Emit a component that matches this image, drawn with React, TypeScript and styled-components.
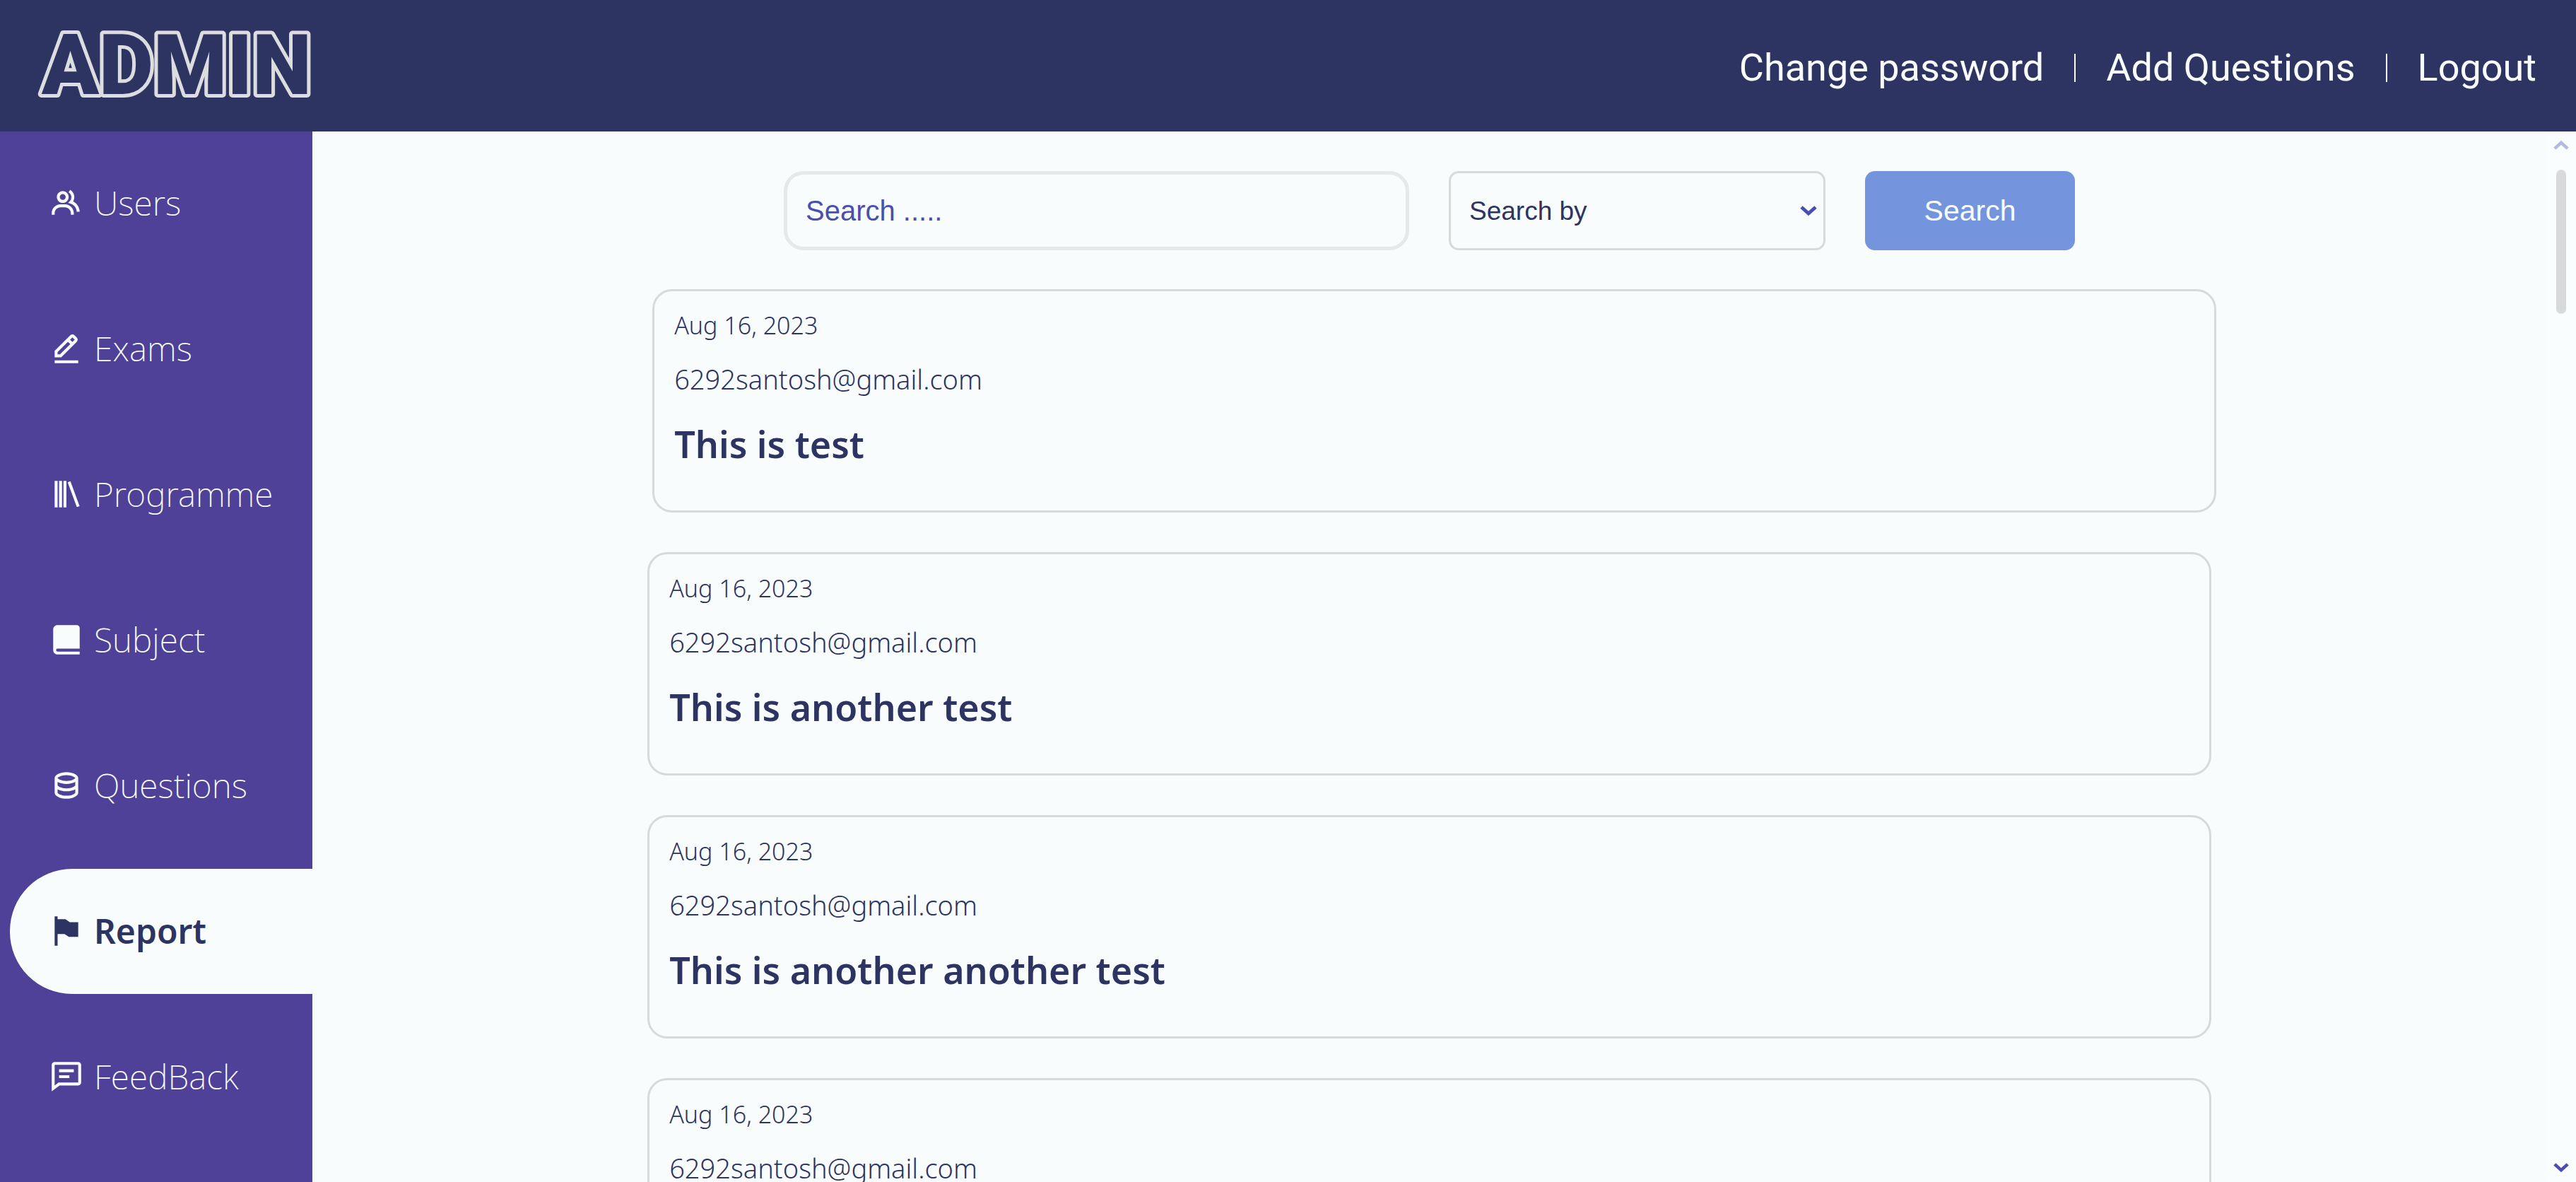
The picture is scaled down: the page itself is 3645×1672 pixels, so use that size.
import React, { useState } from 'react';
import styled, { createGlobalStyle } from 'styled-components';
import type { IconType } from 'react-icons';
import {
  BiCommentDetail,
  BiData,
  BiEditAlt,
  BiGroup,
  BiLibrary,
  BiSolidBookAlt,
  BiSolidFlagAlt,
} from 'react-icons/bi';

const color = {
  navy: '#2e3462',
  purple: '#4f4198',
  indigo: '#4a4fae',
  blue: '#7495dd',
  paper: '#f8fcfd',
  line: '#d8d9db',
  softLine: '#e6e8ea',
};

const GlobalStyle = createGlobalStyle`
  *, *::before, *::after { box-sizing: border-box; }
  body {
    margin: 0;
    background: ${color.paper};
    color: ${color.navy};
    font-family: "Noto Sans", "Open Sans", sans-serif;
  }
`;

const Page = styled.div`
  display: flex;
  flex-direction: column;
  height: 100vh;
  overflow: hidden;
`;

const Header = styled.header`
  display: flex;
  align-items: center;
  justify-content: space-between;
  flex: none;
  padding: 18px 56px 18px 48px;
  background: ${color.navy};
`;

const Wordmark = styled.svg`
  display: block;
  width: 420px;
  height: 150px;

  text {
    font-family: Roboto, sans-serif;
    font-weight: 900;
    font-size: 119px;
    fill: ${color.navy};
    stroke: #dcdddf;
    stroke-width: 10px;
    stroke-linejoin: round;
    paint-order: stroke fill;
  }
`;

const TopNav = styled.nav`
  display: flex;
  align-items: center;
  gap: 43px;
  padding-top: 6px;
`;

const TopLink = styled.a`
  color: ${color.paper};
  font-family: Roboto, sans-serif;
  font-size: 54px;
  line-height: 64px;
  text-decoration: none;
  white-space: nowrap;
`;

const Divider = styled.span`
  width: 2px;
  height: 40px;
  background: ${color.paper};
`;

const Body = styled.div`
  display: flex;
  flex: 1;
  min-height: 0;
`;

const Sidebar = styled.nav`
  display: flex;
  flex-direction: column;
  flex: none;
  gap: 29px;
  width: 442px;
  padding: 13px 0 0 14px;
  background: ${color.purple};
`;

const SideLink = styled.a<{ $active: boolean }>`
  display: flex;
  align-items: center;
  gap: 14px;
  padding: 56px 0 57px 55px;
  border-radius: 88px 0 0 88px;
  background: ${p => (p.$active ? color.paper : 'transparent')};
  color: ${p => (p.$active ? color.navy : color.paper)};
  font-size: 48px;
  font-weight: ${p => (p.$active ? 600 : 200)};
  line-height: 64px;
  text-decoration: none;

  svg {
    flex: none;
    width: 50px;
    height: 50px;
  }
`;

const Main = styled.main`
  flex: 1;
  min-width: 0;
  overflow: hidden;
  padding-top: 56px;
`;

const SearchForm = styled.form`
  display: flex;
  justify-content: center;
  gap: 56px;
  margin-bottom: 55px;
`;

const SearchInput = styled.input`
  width: 28%;
  height: 112px;
  padding: 0 26px;
  border: 5px solid ${color.softLine};
  border-radius: 28px;
  background: ${color.paper};
  color: ${color.navy};
  font-family: "Liberation Sans", Arial, sans-serif;
  font-size: 40px;
  outline: none;

  &::placeholder {
    color: ${color.indigo};
    opacity: 1;
  }
`;

const SelectBox = styled.div`
  display: grid;
  align-items: center;
  width: 533px;

  > * { grid-area: 1 / 1; }

  svg {
    justify-self: end;
    width: 24px;
    height: 16px;
    margin-right: 12px;
    color: ${color.indigo};
    pointer-events: none;
  }
`;

const Select = styled.select`
  width: 100%;
  height: 112px;
  padding: 0 26px;
  border: 3px solid ${color.line};
  border-radius: 14px;
  background: ${color.paper};
  color: ${color.navy};
  font-family: "Liberation Sans", Arial, sans-serif;
  font-size: 37px;
  appearance: none;
`;

const SearchButton = styled.button`
  width: 297px;
  height: 112px;
  border: 0;
  border-radius: 14px;
  background: ${color.blue};
  color: ${color.paper};
  font-family: "Liberation Sans", Arial, sans-serif;
  font-size: 41px;
`;

const Reports = styled.div`
  display: flex;
  flex-direction: column;
  gap: 56px;
`;

/* The newest report sits slightly to the right of the older ones. */
const Latest = styled.section`
  display: flex;
  justify-content: center;
  margin: 0 -7px 0 7px;
`;

const Earlier = styled.section`
  display: flex;
  flex-direction: column;
  align-items: center;
  gap: 56px;
`;

const Card = styled.article`
  width: 70%;
  padding: 24px 28px 54px;
  border: 3px solid ${color.line};
  border-radius: 28px;
`;

const CardDate = styled.time`
  display: block;
  font-size: 34px;
  font-weight: 300;
  line-height: 48px;
`;

const CardEmail = styled.p`
  margin: 24px 0;
  font-size: 38px;
  font-weight: 300;
  line-height: 56px;
`;

const CardTitle = styled.h2`
  margin: 0;
  font-size: 52px;
  font-weight: 600;
  line-height: 80px;
`;

const ScrollRail = styled.div`
  display: flex;
  flex-direction: column;
  align-items: center;
  flex: none;
  width: 42px;
  padding: 11px 0 12px;
  background: #fafdfe;
`;

const ScrollArrow = styled.button<{ $dim?: boolean }>`
  padding: 0;
  border: 0;
  background: none;
  color: ${p => (p.$dim ? '#b3bbe0' : color.indigo)};
  line-height: 0;

  svg {
    width: 22px;
    height: 17px;
  }
`;

const ScrollTrack = styled.div`
  flex: 1;
  padding-top: 26px;
`;

const ScrollThumb = styled.div`
  width: 14px;
  height: 204px;
  border-radius: 7px;
  background: ${color.line};
`;

const Chevron = ({ up = false }: { up?: boolean }) => (
  <svg viewBox="0 0 24 16" fill="none" stroke="currentColor" strokeWidth="5" aria-hidden="true">
    <path d={up ? 'M2 13 L12 4 L22 13' : 'M2 3 L12 12 L22 3'} />
  </svg>
);

const topLinks = ['Change password', 'Add Questions', 'Logout'];

const sideLinks: { label: string; Icon: IconType }[] = [
  { label: 'Users', Icon: BiGroup },
  { label: 'Exams', Icon: BiEditAlt },
  { label: 'Programme', Icon: BiLibrary },
  { label: 'Subject', Icon: BiSolidBookAlt },
  { label: 'Questions', Icon: BiData },
  { label: 'Report', Icon: BiSolidFlagAlt },
  { label: 'FeedBack', Icon: BiCommentDetail },
];

type Report = { date: string; email: string; title: string };

const latest: Report = { date: 'Aug 16, 2023', email: '6292santosh@gmail.com', title: 'This is test' };

const earlier: Report[] = [
  { date: 'Aug 16, 2023', email: '6292santosh@gmail.com', title: 'This is another test' },
  { date: 'Aug 16, 2023', email: '6292santosh@gmail.com', title: 'This is another another test' },
  { date: 'Aug 16, 2023', email: '6292santosh@gmail.com', title: '' },
];

const ReportCard = ({ report }: { report: Report }) => (
  <Card>
    <CardDate dateTime="2023-08-16">{report.date}</CardDate>
    <CardEmail>{report.email}</CardEmail>
    {report.title && <CardTitle>{report.title}</CardTitle>}
  </Card>
);

export default function App() {
  const [query, setQuery] = useState('');
  const [active, setActive] = useState('Report');

  return (
    <>
      <GlobalStyle />
      <Page>
        <Header>
          <Wordmark viewBox="0 0 420 150" role="img" aria-label="ADMIN">
            <text x="11" y="115">ADMIN</text>
          </Wordmark>
          <TopNav aria-label="Account">
            {topLinks.map((label, i) => (
              <React.Fragment key={label}>
                {i > 0 && <Divider />}
                <TopLink href="#">{label}</TopLink>
              </React.Fragment>
            ))}
          </TopNav>
        </Header>
        <Body>
          <Sidebar aria-label="Sections">
            {sideLinks.map(({ label, Icon }) => (
              <SideLink key={label} href="#" $active={label === active} onClick={() => setActive(label)}>
                <Icon aria-hidden="true" />
                {label}
              </SideLink>
            ))}
          </Sidebar>
          <Main>
            <SearchForm onSubmit={e => e.preventDefault()}>
              <SearchInput
                aria-label="Search"
                placeholder="Search ....."
                value={query}
                onChange={e => setQuery(e.target.value)}
              />
              <SelectBox>
                <Select aria-label="Search by" defaultValue="">
                  <option value="">Search by</option>
                </Select>
                <Chevron />
              </SelectBox>
              <SearchButton type="submit">Search</SearchButton>
            </SearchForm>
            <Reports>
              <Latest>
                <ReportCard report={latest} />
              </Latest>
              <Earlier>
                {earlier.map((report, i) => (
                  <ReportCard key={i} report={report} />
                ))}
              </Earlier>
            </Reports>
          </Main>
          <ScrollRail>
            <ScrollArrow type="button" aria-label="Scroll up" $dim>
              <Chevron up />
            </ScrollArrow>
            <ScrollTrack>
              <ScrollThumb />
            </ScrollTrack>
            <ScrollArrow type="button" aria-label="Scroll down">
              <Chevron />
            </ScrollArrow>
          </ScrollRail>
        </Body>
      </Page>
    </>
  );
}
